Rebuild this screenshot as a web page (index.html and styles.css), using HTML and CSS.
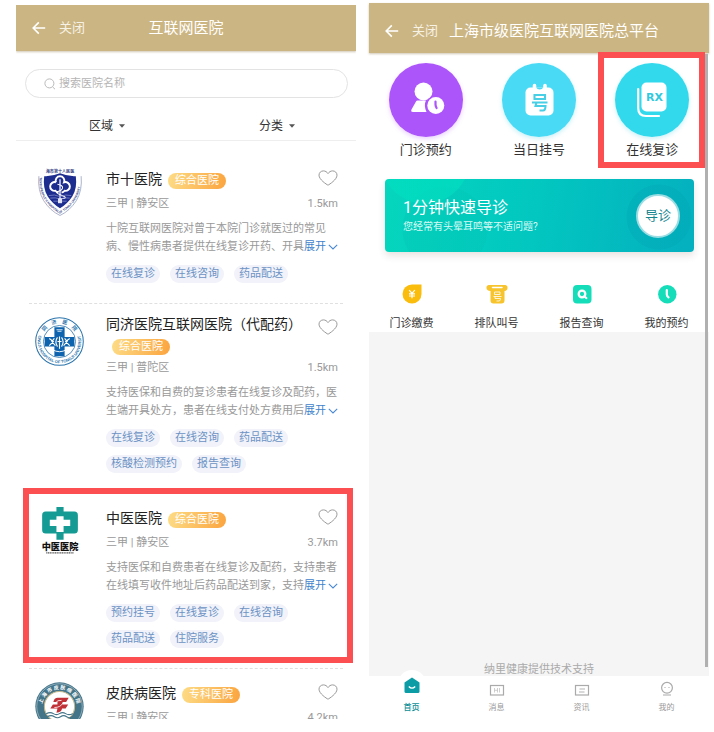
FILE: index.html
```html
<!DOCTYPE html>
<html lang="zh-CN">
<head>
<meta charset="utf-8">
<meta name="viewport" content="width=device-width, initial-scale=1">
<title>互联网医院</title>
<link rel="stylesheet" href="styles.css">
</head>
<body>
<svg class="defs" aria-hidden="true">
  <symbol id="heart" viewBox="0 0 20 16"><path d="M10 15.2C8.6 14.4 1 9.6 1 5.2C1 2.6 3 .9 5.4 .9C7.4 .9 9 2 10 3.6C11 2 12.6 .9 14.6 .9C17 .9 19 2.6 19 5.2C19 9.6 11.4 14.4 10 15.2Z" fill="none" stroke="#999" stroke-width="1"/></symbol>
  <symbol id="chev" viewBox="0 0 10 6"><path d="M.8 .8L5 5L9.2 .8" fill="none" stroke="#4a8ad0" stroke-width="1.1"/></symbol>
  <symbol id="back" viewBox="0 0 14 14"><path d="M13.2 7H1.4M6.8 1.4L1.2 7L6.8 12.6" fill="none" stroke="#fff" stroke-width="1.6"/></symbol>
  <symbol id="caret" viewBox="0 0 6 4"><path d="M0 .3H6L3 3.8Z" fill="#555"/></symbol>
</svg>
<div class="page">
  <section class="phone phone-list">
    <header class="bar">
      <button class="icon-btn" aria-label="返回"><svg class="back"><use href="#back"/></svg></button>
      <button class="close">关闭</button>
      <h1 class="bar-title bar-title-center">互联网医院</h1>
    </header>
    <label class="search">
      <svg class="search-icon" viewBox="0 0 12 12"><circle cx="5.4" cy="5.4" r="4.500" fill="none" stroke="#bbb"/><path d="M8.600 8.900L11 11.200" stroke="#bbb"/></svg>
      <input type="search" placeholder="搜索医院名称" aria-label="搜索医院名称">
    </label>
    <div class="filters">
      <label class="filter"><select aria-label="区域"><option>区域</option></select><svg class="caret"><use href="#caret"/></svg></label>
      <label class="filter"><select aria-label="分类"><option>分类</option></select><svg class="caret"><use href="#caret"/></svg></label>
    </div>
    <div class="list">
      <article class="card">
        <svg class="logo" viewBox="0 0 48 48" aria-hidden="true">
          <path id="shield-text" d="M4.6 9Q3.500 22 9.500 31Q15.500 40 24.500 44.500Q33.500 40 39.500 31Q45.500 22 44.400 9" fill="none"/>
          <path d="M3.800 8Q2.500 22 8.500 32Q15 42 24.500 46.500Q34 42 40.500 32Q46.500 22 45.200 8" fill="none" stroke="#8b94b8" stroke-width=".7"/>
          <text class="seal-cn navy" x="24.500" y="4.600" text-anchor="middle">海市第十人民医</text>
          <text class="seal-en navy"><textPath href="#shield-text">TENTH PEOPLE'S HOSPITAL OF TONGJI UNIVERSITY</textPath></text>
          <path d="M9 8Q16 8.500 24.500 5.200Q33 8.500 40 8Q41.500 20 36.500 28Q31.500 35.500 24.500 39.500Q17.500 35.500 12.500 28Q7.500 20 9 8Z" fill="#1d2c8f"/>
          <g fill="none" stroke="#fff" stroke-width="1.900"><path d="M20.500 14A4.300 4.300 0 1 1 28.500 14A4.300 4.300 0 1 1 29 22.300A4.700 4.700 0 0 1 26 24M20.500 14A4.300 4.300 0 1 0 20 22.300A4.700 4.700 0 0 0 23 24"/><path d="M24.500 11V34" stroke-width="1.200"/><path d="M22 16Q27.500 17 27 19.500T22.500 23T26.500 27T23 30" stroke-width="1"/></g>
          <path d="M13.500 27Q19 25.500 24.500 28Q30 25.500 35.500 27M15 29.500Q20 28.500 24.500 30.500Q29 28.500 34 29.500M18 32.500H31" fill="none" stroke="#8a95d0" stroke-width=".7"/>
          <path d="M22.500 30H26.500V34.500H22.500Z" fill="#dfe3f5"/>
        </svg>
        <div class="info">
          <div class="head"><h2>市十医院<span class="badge">综合医院</span></h2><button class="like" aria-label="收藏"><svg><use href="#heart"/></svg></button></div>
          <p class="meta"><span>三甲 | 静安区</span><span>1.5km</span></p>
          <p class="desc">十院互联网医院对曾于本院门诊就医过的常见病、慢性病患者提供在线复诊开药、开具<button class="more">展开<svg><use href="#chev"/></svg></button></p>
          <ul class="tags"><li>在线复诊</li><li>在线咨询</li><li>药品配送</li></ul>
        </div>
      </article>
      <article class="card">
        <svg class="logo" viewBox="0 0 48 48" aria-hidden="true">
          <circle cx="24" cy="24" r="23.300" fill="#fff" stroke="#2c74ac" stroke-width="1"/>
          <circle cx="24" cy="24" r="15.700" fill="#fff" stroke="#2c74ac" stroke-width=".8"/>
          <path id="tj-top" d="M7.500 18A17.400 17.400 0 0 1 40.500 18" fill="none"/>
          <path id="tj-bottom" d="M4 17A21.200 21.200 0 1 0 44 17" fill="none"/>
          <text class="seal-cn seal-big blue"><textPath href="#tj-top" startOffset="50%" text-anchor="middle">同　济　医　院</textPath></text>
          <text class="seal-en seal-wide blue"><textPath href="#tj-bottom" startOffset="50%" text-anchor="middle">TONGJI HOSPITAL OF TONGJI UNIVERSITY</textPath></text>
          <path d="M19 10H29V19.500H38.500V29H29V38.500H19V29H9.500V19.500H19Z" fill="#0d63ad"/>
          <path d="M21 12.500H27M22 14H26" stroke="#fff" stroke-width=".8"/>
          <g fill="none" stroke="#fff" stroke-width="1.100"><path d="M14 21L18 24L14 28M19 21L16.500 24L20 28M22 20Q19 24 22 29M26 20Q29 24 26 29M24 19V31M34 21L30 24L34 28M29 21L31.500 24L28 28M22 24H26"/><path d="M17 32Q24 36 31 32" stroke-width=".9"/></g>
        </svg>
        <div class="info">
          <div class="head head-tall"><h2>同济医院互联网医院（代配药）<span class="badge">综合医院</span></h2><button class="like" aria-label="收藏"><svg><use href="#heart"/></svg></button></div>
          <p class="meta"><span>三甲 | 普陀区</span><span>1.5km</span></p>
          <p class="desc">支持医保和自费的复诊患者在线复诊及配药，医生端开具处方，患者在线支付处方费用后<button class="more">展开<svg><use href="#chev"/></svg></button></p>
          <ul class="tags"><li>在线复诊</li><li>在线咨询</li><li>药品配送</li><li>核酸检测预约</li><li>报告查询</li></ul>
        </div>
      </article>
      <article class="card card-marked">
        <svg class="logo" viewBox="0 0 48 48" aria-hidden="true">
          <path d="M21 0H28V4.500H38.500A3.500 3.500 0 0 1 42 8V22.500A3.500 3.500 0 0 1 38.500 26H28V32H21V26H10.500A3.500 3.500 0 0 1 7 22.500V8A3.500 3.500 0 0 1 10.500 4.500H21Z" fill="#159b93"/>
          <path d="M21 9H28V12.500H34.500V18.500H28V24.500H21V18.500H14.500V12.500H21Z" fill="#fff"/>
          <text class="logo-name" x="24.500" y="42" text-anchor="middle">中医医院</text>
          <path d="M11 45H38" stroke="#555" stroke-width="1.200" stroke-dasharray="1.200 .5"/>
        </svg>
        <div class="info">
          <div class="head"><h2>中医医院<span class="badge">综合医院</span></h2><button class="like" aria-label="收藏"><svg><use href="#heart"/></svg></button></div>
          <p class="meta"><span>三甲 | 静安区</span><span>3.7km</span></p>
          <p class="desc">支持医保和自费患者在线复诊及配药，支持患者在线填写收件地址后药品配送到家，支持<button class="more">展开<svg><use href="#chev"/></svg></button></p>
          <ul class="tags"><li>预约挂号</li><li>在线复诊</li><li>在线咨询</li><li>药品配送</li><li>住院服务</li></ul>
        </div>
      </article>
      <article class="card">
        <svg class="logo" viewBox="0 0 48 48" aria-hidden="true">
          <circle cx="24" cy="24" r="23.700" fill="#447488"/>
          <circle cx="24" cy="24" r="22.300" fill="none" stroke="#b9ced6" stroke-width=".6"/>
          <circle cx="24" cy="24" r="14.800" fill="#fff" stroke="#c6b98c" stroke-width="1"/>
          <path id="sk-top" d="M7.200 28A17.200 17.200 0 1 1 40.800 28" fill="none"/>
          <text class="seal-cn seal-big pale"><textPath href="#sk-top" startOffset="50%" text-anchor="middle">上 海 市 皮 肤 病 医 院</textPath></text>
          <path d="M18 19.500Q19 15 23 15.500H33L30.500 19.500H27V22H32.500L30 26H26.500Q26 30 21 30L22 26H15L17.500 22H22V19.500Z" fill="#bf3037"/>
          <path d="M20 20.500Q22 17.500 26 18M19 25Q25 25 27.500 20.500" fill="none" stroke="#fff" stroke-width=".8"/>
          <path d="M11 31Q15 29 18 31T24 31T30 31T37 31M12 34Q16 32 19 34T25 34T31 34T36 34" fill="none" stroke="#447488" stroke-width="1.100"/>
        </svg>
        <div class="info">
          <div class="head"><h2>皮肤病医院<span class="badge">专科医院</span></h2><button class="like" aria-label="收藏"><svg><use href="#heart"/></svg></button></div>
          <p class="meta"><span>三甲 | 静安区</span><span>4.2km</span></p>
        </div>
      </article>
    </div>
  </section>

  <section class="phone phone-home">
    <header class="bar bar-tall">
      <button class="icon-btn" aria-label="返回"><svg class="back"><use href="#back"/></svg></button>
      <button class="close">关闭</button>
      <h1 class="bar-title">上海市级医院互联网医院总平台</h1>
    </header>
    <div class="home">
      <nav class="services">
        <a href="#booking"><svg viewBox="0 0 74 74"><circle cx="37" cy="37" r="37" fill="#ac55fa"/><circle cx="34.500" cy="28.500" r="9" fill="#fff"/><path d="M28.500 37.500H37Q34.500 42 37.500 49H24Q21.500 49 22.500 46.500L27 38.500Q27.500 37.500 28.500 37.500Z" fill="#fff"/><circle cx="46.800" cy="42.500" r="10" fill="#ac55fa"/><circle cx="46.800" cy="42.500" r="8.500" fill="#fff"/><path d="M46.500 38.500V41.500Q46.500 43 47.600 45" fill="none" stroke="#ac55fa" stroke-width="2.200" stroke-linecap="round"/></svg>门诊预约</a>
        <a href="#today"><svg viewBox="0 0 74 74"><circle cx="37" cy="37" r="37" fill="#49daf5"/><rect x="23.500" y="24.500" width="28" height="28" rx="5" fill="#fff"/><path d="M32.500 22.500V26M43 22.500V26" stroke="#fff" stroke-width="3.600" stroke-linecap="round"/><path d="M34.300 24.500Q35 26.500 37.700 26.500T41.200 24.500Z" fill="#49daf5"/><path d="M32.500 32H43V36H32.500ZM30 39.500H45.500M34.500 39.500L33.500 43H43.500Q43.500 47.500 41 47.500H37.500" fill="none" stroke="#49cfe5" stroke-width="2.100"/></svg>当日挂号</a>
        <a href="#revisit" class="marked"><svg viewBox="0 0 74 74"><circle cx="37" cy="37" r="37" fill="#32d9ed"/><path d="M23.200 26V45Q23.200 53 31 53H44" fill="none" stroke="#fff" stroke-width="2.200" stroke-linecap="round"/><rect x="26.500" y="19.500" width="25" height="29" rx="5" fill="#fff"/><text class="rx" x="39.500" y="38" text-anchor="middle">RX</text></svg>在线复诊</a>
      </nav>
      <div class="banner">
        <div><h2>1分钟快速导诊</h2><p>您经常有头晕耳鸣等不适问题?</p></div>
        <button class="guide">导诊</button>
      </div>
      <nav class="quick">
        <a href="#pay"><svg viewBox="0 0 20 20"><path d="M10 .5H19.500V10A9.500 9.500 0 1 1 10 .5Z" fill="#fbbd0d"/><path d="M7.200 6.200L10 9.300L12.800 6.200M10 9.300V14.300M7 9.800H13M7 12H13" fill="none" stroke="#fff" stroke-width="1.200"/></svg>门诊缴费</a>
        <a href="#queue"><svg viewBox="0 0 20 20"><path d="M2.500 1H17.500A2.500 2.500 0 0 1 20.500 4Q20.500 6.500 17.500 7V16.500A3 3 0 0 1 14.500 19.500H6.500A3 3 0 0 1 3.500 16.500V7Q-.5 6.500 -.5 4A2.500 2.500 0 0 1 2.500 1Z" fill="#f7c42d"/><path d="M5.500 3.500H15" stroke="#fff" stroke-width="1.500" stroke-linecap="round"/><path d="M7.500 8H13V10.500H7.500ZM6.500 12.500H14.500M8 12.500V14.500H13.500Q13.500 17 12 17H9.500" fill="none" stroke="#fff" stroke-width=".8"/></svg>排队叫号</a>
        <a href="#report"><svg viewBox="0 0 20 20"><rect x="1" y="1" width="18.500" height="18.500" rx="4" fill="#16ddb9"/><circle cx="10" cy="10" r="3.300" fill="none" stroke="#fff" stroke-width="2.300"/><path d="M12.500 12.500L14.300 14" stroke="#fff" stroke-width="2.200" stroke-linecap="round"/></svg>报告查询</a>
        <a href="#mine"><svg viewBox="0 0 20 20"><circle cx="10.300" cy="10.300" r="9.200" fill="#16ddb9"/><path d="M9.800 6V10.500Q9.800 12 11.500 13.300" fill="none" stroke="#fff" stroke-width="2.200" stroke-linecap="round"/></svg>我的预约</a>
      </nav>
    </div>
    <p class="support">纳里健康提供技术支持</p>
    <nav class="tabs">
      <a href="#home" class="active"><svg viewBox="0 0 18 18"><path d="M9 .5L16.500 5.500V14.500Q16.500 16 15 16H3Q1.500 16 1.500 14.500V5.500Z" fill="#0c9ca5"/><path d="M5.800 9.500Q9 12.800 12.200 9.500" fill="none" stroke="#fff" stroke-width="1.300"/></svg>首页</a>
      <a href="#news"><svg viewBox="0 0 18 18"><rect x="2.500" y="4.500" width="13" height="9.500" fill="none" stroke="#aaa" stroke-width="1.200"/><path d="M6.500 7V11.500M9.500 7V11.500M6.500 9.300H9.500M11.500 7V11.500" stroke="#bbb" stroke-width=".7"/></svg>消息</a>
      <a href="#info"><svg viewBox="0 0 18 18"><rect x="2.500" y="4.500" width="13" height="9.500" fill="none" stroke="#aaa" stroke-width="1.200"/><path d="M6.500 8H12M6 11H11.500" stroke="#aaa" stroke-width=".9"/></svg>资讯</a>
      <a href="#me"><svg viewBox="0 0 18 18"><circle cx="9" cy="6.800" r="5.400" fill="none" stroke="#aaa" stroke-width="1.200"/><path d="M6.500 6.500H7.500M10.500 6.500H11.500M5 14H13" stroke="#aaa" stroke-width="1.200"/></svg>我的</a>
    </nav>
    <div class="thumb"></div>
  </section>
</div>
</body>
</html>
```
FILE: styles.css
```css
* { box-sizing: border-box; margin: 0; padding: 0; }

body {
  background: #fff;
  color: #333;
  font-family: Roboto, "Noto Sans CJK SC", sans-serif;
  font-size: 11px;
  line-height: 16px;
}

button, input, select { font: inherit; color: inherit; background: none; border: 0; }
a { color: inherit; text-decoration: none; }
h1, h2 { font-weight: 400; }
svg { display: block; flex: none; overflow: visible; }
.defs { position: absolute; width: 0; height: 0; }

.page {
  display: grid;
  grid-template-columns: 1fr 1fr;
  gap: 13px;
  height: 100vh;
  padding: 3px 5px 13px 16px;
}

.phone {
  position: relative;
  display: flex;
  flex-direction: column;
  min-width: 0;
  min-height: 0;
}
.phone-list { margin-top: 2px; overflow: hidden; }

/* Title bars */
.bar {
  position: relative;
  display: flex;
  flex: none;
  align-items: center;
  height: 46px;
  padding-left: 16px;
  background: #cbb582;
  box-shadow: 0 1px 2px rgba(120, 90, 40, .35);
  color: #fff;
}
.bar-tall { height: 50px; padding-top: 5px; }
.icon-btn { flex: none; }
.back { width: 14px; height: 14px; }
.close { margin-left: 13px; font-size: 13px; line-height: 20px; color: #f7f2e6; }
.bar-title { margin-left: 11px; font-size: 15px; line-height: 22px; white-space: nowrap; }
.bar-title-center { position: absolute; left: 0; right: 0; margin: 0; text-align: center; pointer-events: none; }

/* Search and filters */
.search {
  display: flex;
  flex: none;
  align-items: center;
  gap: 3px;
  height: 29px;
  margin: 18px 8px 0 9px;
  padding: 0 18px;
  border: 1px solid #e3e3e3;
  border-radius: 15px;
}
.search-icon { width: 12px; height: 12px; }
.search input { flex: 1; min-width: 0; outline: 0; appearance: none; }
.search input::placeholder { color: #b5b5b5; opacity: 1; }

.filters {
  display: grid;
  flex: none;
  grid-template-columns: 1fr 1fr;
  height: 43px;
  padding-top: 12px;
  border-bottom: 1px solid #eee;
}
.filter { display: flex; align-items: center; justify-content: center; gap: 5px; height: 31px; padding-left: 12px; }
.filter select { appearance: none; font-size: 12px; line-height: 18px; }
.caret { width: 6px; height: 4px; }

/* Hospital list */
.list { padding: 14px 13px 0; }
.card {
  position: relative;
  display: flex;
  gap: 22px;
  padding: 10px 5px 20px 6px;
  border-bottom: 1px dashed #e0e0e0;
}
.card-marked::after {
  content: "";
  position: absolute;
  inset: -6px -10px 5px -6px;
  border: 6px solid #fb4f52;
}
.logo { width: 49px; height: 49px; margin-top: 3px; }
.info { flex: 1; min-width: 0; }
.head { display: flex; justify-content: space-between; align-items: flex-start; }
.head h2 { flex: 1; margin: 4px 0 6px; font-size: 14px; line-height: 21px; color: #222; }
.head-tall h2 { margin: 0 0 4px; }
.badge {
  display: inline-block;
  margin-left: 6px;
  padding: 0 7px;
  border-radius: 8px;
  background: linear-gradient(100deg, #fddc85, #fba43f);
  color: #fff;
  font-size: 11px;
  line-height: 16px;
}
.like { width: 20px; height: 16px; margin-top: 5px; }
.like svg { width: 20px; height: 16px; }
.meta { display: flex; justify-content: space-between; color: #999; }
.desc { margin-top: 8px; line-height: 18px; color: #999; }
.more { display: inline-flex; align-items: center; gap: 2px; color: #3f83cc; line-height: 16px; }
.more svg { width: 10px; height: 6px; }
.tags { display: flex; flex-wrap: wrap; gap: 8px 10px; margin-top: 9px; list-style: none; }
.tags li { padding: 0 5px; border-radius: 9px; background: #f1f2fa; color: #6c93c4; line-height: 18px; }

/* Lettering in the emblems */
.seal-cn { font: 700 4px "Noto Sans CJK SC", sans-serif; }
.seal-en { font: 700 3px "Liberation Sans", sans-serif; }
.seal-big { font-size: 5px; }
.seal-wide { font-size: 4px; }
.navy { fill: #2f3c7f; }
.blue { fill: #2c74ac; }
.pale { fill: #fff; }
.logo-name { font: 900 9px "Noto Sans CJK SC", sans-serif; fill: #111; }
.rx { font: 700 11px "DejaVu Sans", sans-serif; fill: #32c9dd; }

/* Platform home */
.phone-home { background: #f5f5f5; }
.home { background: #fff; }
.services { display: grid; grid-template-columns: repeat(3, 1fr); padding: 10px 0 20px; }
.services a {
  position: relative;
  display: flex;
  flex-direction: column;
  align-items: center;
  gap: 4px;
  font-size: 13px;
  line-height: 18px;
}
.services svg { width: 74px; height: 74px; border-radius: 50%; box-shadow: 0 2px 4px rgba(90, 210, 230, .3); }
.services a:first-child svg { box-shadow: 0 2px 4px rgba(172, 85, 250, .25); }
.services .marked::after {
  content: "";
  position: absolute;
  inset: -11px 4px -9px 2px;
  border: 6px solid #fb4f52;
}

.banner {
  display: flex;
  align-items: center;
  justify-content: space-between;
  height: 73px;
  margin: 0 15px 0 16px;
  padding: 0 14px 0 18px;
  border-radius: 4px;
  background:
    radial-gradient(circle at 274px 38px, rgba(0, 165, 180, .35) 32px, transparent 33px),
    radial-gradient(circle at 40px -20px, rgba(0, 224, 192, .6) 44px, transparent 45px),
    radial-gradient(circle at 60px 50px, rgba(0, 195, 180, .3) 42px, transparent 43px),
    linear-gradient(100deg, #06d6bd, #02c8c0 45%, #04b0bf);
  box-shadow: 0 4px 7px rgba(100, 60, 60, .14);
  color: #fff;
}
.banner h2 { font-size: 16px; line-height: 22px; }
.banner p { font-size: 10px; line-height: 16px; color: #d8faf5; }
.guide {
  width: 44px;
  height: 44px;
  border: 2px solid #9bdde3;
  border-radius: 50%;
  background: #fff;
  color: #15858f;
  font-size: 13px;
}
.quick { display: grid; grid-template-columns: repeat(4, 1fr); padding-top: 32px; }
.quick a { display: flex; flex-direction: column; align-items: center; gap: 12px; }
.quick svg { width: 20px; height: 20px; }

.support { margin-top: auto; color: #aaa; text-align: center; line-height: 12px; }
.tabs { display: grid; flex: none; grid-template-columns: repeat(4, 1fr); height: 43px; background: #fff; color: #999; }
.tabs a { position: relative; display: flex; flex-direction: column; align-items: center; gap: 3px; padding-top: 5px; font-size: 8px; line-height: 12px; }
.tabs svg { position: relative; width: 18px; height: 18px; }
.tabs .active { color: #0c8f98; font-weight: 500; padding-top: 1px; gap: 7px; }
.tabs .active::before {
  content: "";
  position: absolute;
  top: -6px;
  width: 28px;
  height: 28px;
  border-radius: 50%;
  background: #fff;
}
.thumb { position: absolute; top: 51px; right: 1px; bottom: 52px; width: 3px; background: #b0b0b0; }
```
